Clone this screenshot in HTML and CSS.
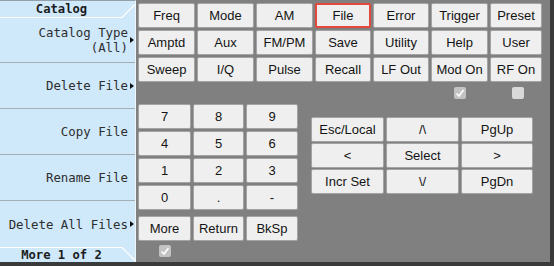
FILE: index.html
```html
<html>
  <head>
    <title>Signal Generator - Catalog</title>
    <link rel="stylesheet" href="styles.css">
  </head>
  <body>
    <div class="screen">
      <section class="softkeys">
        <div class="sk-title">
          Catalog
          <svg class="tab-line" width="136" height="17" viewBox="0 0 136 17">
            <polyline points="0,16.5 122,16.5 135.5,3" fill="none" stroke="#ffffff" stroke-width="1.2" />
          </svg>
        </div>
        <div class="sk sk-menu"><span class="sk-label sk-two-line">Catalog Type<br>(All)</span></div>
        <div class="sk sk-menu"><span class="sk-label">Delete File</span></div>
        <div class="sk"><span class="sk-label">Copy File</span></div>
        <div class="sk"><span class="sk-label">Rename File</span></div>
        <div class="sk sk-menu sk-last"><span class="sk-label">Delete All Files</span></div>
        <div class="sk-footer">
          More 1 of 2
          <svg class="tab-line" width="136" height="15" viewBox="0 0 136 15">
            <polyline points="0,0.5 122,0.5 135.5,14" fill="none" stroke="#ffffff" stroke-width="1.2" />
          </svg>
        </div>
      </section>

      <section class="panel">
        <div class="hardkeys">
          <div class="btn">Freq</div>
          <div class="btn">Mode</div>
          <div class="btn">AM</div>
          <div class="btn btn-active">File</div>
          <div class="btn">Error</div>
          <div class="btn">Trigger</div>
          <div class="btn">Preset</div>

          <div class="btn">Amptd</div>
          <div class="btn">Aux</div>
          <div class="btn">FM/PM</div>
          <div class="btn">Save</div>
          <div class="btn">Utility</div>
          <div class="btn">Help</div>
          <div class="btn">User</div>

          <div class="btn">Sweep</div>
          <div class="btn">I/Q</div>
          <div class="btn">Pulse</div>
          <div class="btn">Recall</div>
          <div class="btn">LF Out</div>
          <div class="btn">Mod On</div>
          <div class="btn">RF On</div>

          <div class="cb-cell cb-mod"><span class="cb cb-on"><svg width="12" height="12" viewBox="0 0 12 12"><polyline points="2.5,6.5 5,9 9.5,3" fill="none" stroke="#ffffff" stroke-width="1.6" /></svg></span></div>
          <div class="cb-cell cb-rf"><span class="cb"></span></div>
        </div>

        <div class="lower">
          <div class="numpad">
            <div class="digits">
              <div class="btn">7</div>
              <div class="btn">8</div>
              <div class="btn">9</div>
              <div class="btn">4</div>
              <div class="btn">5</div>
              <div class="btn">6</div>
              <div class="btn">1</div>
              <div class="btn">2</div>
              <div class="btn">3</div>
              <div class="btn">0</div>
              <div class="btn">.</div>
              <div class="btn">-</div>
            </div>
            <div class="digits numpad-actions">
              <div class="btn">More</div>
              <div class="btn">Return</div>
              <div class="btn">BkSp</div>
            </div>
            <div class="numpad-check">
              <span class="cb cb-on"><svg width="12" height="12" viewBox="0 0 12 12"><polyline points="2.5,6.5 5,9 9.5,3" fill="none" stroke="#ffffff" stroke-width="1.6" /></svg></span>
            </div>
          </div>

          <div class="navpad">
            <div class="btn">Esc/Local</div>
            <div class="btn">/\</div>
            <div class="btn">PgUp</div>
            <div class="btn">&lt;</div>
            <div class="btn">Select</div>
            <div class="btn">&gt;</div>
            <div class="btn">Incr Set</div>
            <div class="btn">\/</div>
            <div class="btn">PgDn</div>
          </div>
        </div>
      </section>
    </div>
  </body>
</html>
```

FILE: styles.css
```css
:root {
  --mono: "DejaVu Sans Mono", "Liberation Mono", monospace;
  --sans: "Liberation Sans", Arial, sans-serif;

  --screen-edge: #3a3a3a;
  --panel-bg: #808080;

  --sk-bg: #cfe8fa;
  --sk-text: #2e2e2e;
  --sk-rule: #a2adb5;

  --btn-bg: #efefef;
  --btn-border: #a4a4a4;
  --btn-text: #141414;
  --btn-active: #e5483b;
}

* {
  box-sizing: border-box;
}

body,
html {
  margin: 0;
  padding: 0;
  background: var(--screen-edge);
}

.screen {
  display: flex;
  width: 554px;
  height: 266px;
  padding: 0 4px 4px 0;
  background: var(--screen-edge);
}

/* softkey column */

.softkeys {
  display: flex;
  flex-direction: column;
  width: 136px;
  height: 262px;
  background: var(--sk-bg);
  border-top: 1px solid #93a0a9;
  border-right: 1px solid #eef6fb;
  font-family: var(--mono);
  color: var(--sk-text);
}

.sk-title,
.sk-footer {
  position: relative;
  display: flex;
  align-items: center;
  justify-content: center;
  padding-right: 12px;
  font-weight: bold;
  font-size: 12.2px;
  color: #1c1c1c;
}

.sk-title {
  height: 16px;
}

.sk-footer {
  height: 15px;
  padding-top: 1px;
}

.tab-line {
  position: absolute;
  left: 0;
  top: 0;
}

.sk {
  display: flex;
  align-items: center;
  justify-content: flex-end;
  height: 46px;
  padding-right: 1px;
  border-bottom: 1px solid var(--sk-rule);
  font-size: 12.4px;
  line-height: 15px;
}

.sk-last {
  border-bottom: none;
}

.sk-label {
  text-align: right;
}

.sk-two-line {
  padding-top: 1px;
}

.sk::after {
  content: "";
  width: 0;
  height: 0;
  margin-left: 2px;
  border-left: 4px solid transparent;
  border-top: 3px solid transparent;
  border-bottom: 3px solid transparent;
}

.sk-menu::after {
  border-left-color: #111111;
}

/* front panel */

.panel {
  flex: 1;
  height: 262px;
  padding: 3px 0 0 2px;
  background: var(--panel-bg);
}

.btn {
  display: flex;
  align-items: center;
  justify-content: center;
  background: var(--btn-bg);
  border: 1px solid var(--btn-border);
  border-radius: 2px;
  font-family: var(--sans);
  font-size: 13px;
  color: var(--btn-text);
  white-space: nowrap;
}

.btn-active {
  border: 2px solid var(--btn-active);
}

.hardkeys {
  display: grid;
  grid-template-columns: 57px 57px 57px 56px 56px 57px 52px;
  grid-template-rows: 25px 25px 25px 18px;
  gap: 2px;
}

.cb-cell {
  display: flex;
  align-items: center;
  justify-content: center;
  grid-row: 4;
}

.cb-mod {
  grid-column: 6;
}

.cb-rf {
  grid-column: 7;
  padding-left: 3px;
}

.cb {
  display: block;
  width: 12px;
  height: 12px;
  border-radius: 2px;
  background: #d9d9d9;
}

.cb-on {
  background: #c3c3c3;
}

.cb svg {
  display: block;
}

.lower {
  display: flex;
  align-items: flex-start;
  gap: 13px;
  margin-top: 2px;
}

.numpad {
  display: flex;
  flex-direction: column;
}

.digits {
  display: grid;
  grid-template-columns: 53px 51px 52px;
  grid-auto-rows: 25px;
  gap: 2px;
}

.numpad-actions {
  margin-top: 6px;
}

.numpad-check {
  display: flex;
  justify-content: center;
  width: 53px;
  margin-top: 4px;
}

.navpad {
  display: grid;
  grid-template-columns: 73px 73px 72px;
  grid-auto-rows: 25px;
  gap: 1px 2px;
  margin-top: 13px;
}
```
